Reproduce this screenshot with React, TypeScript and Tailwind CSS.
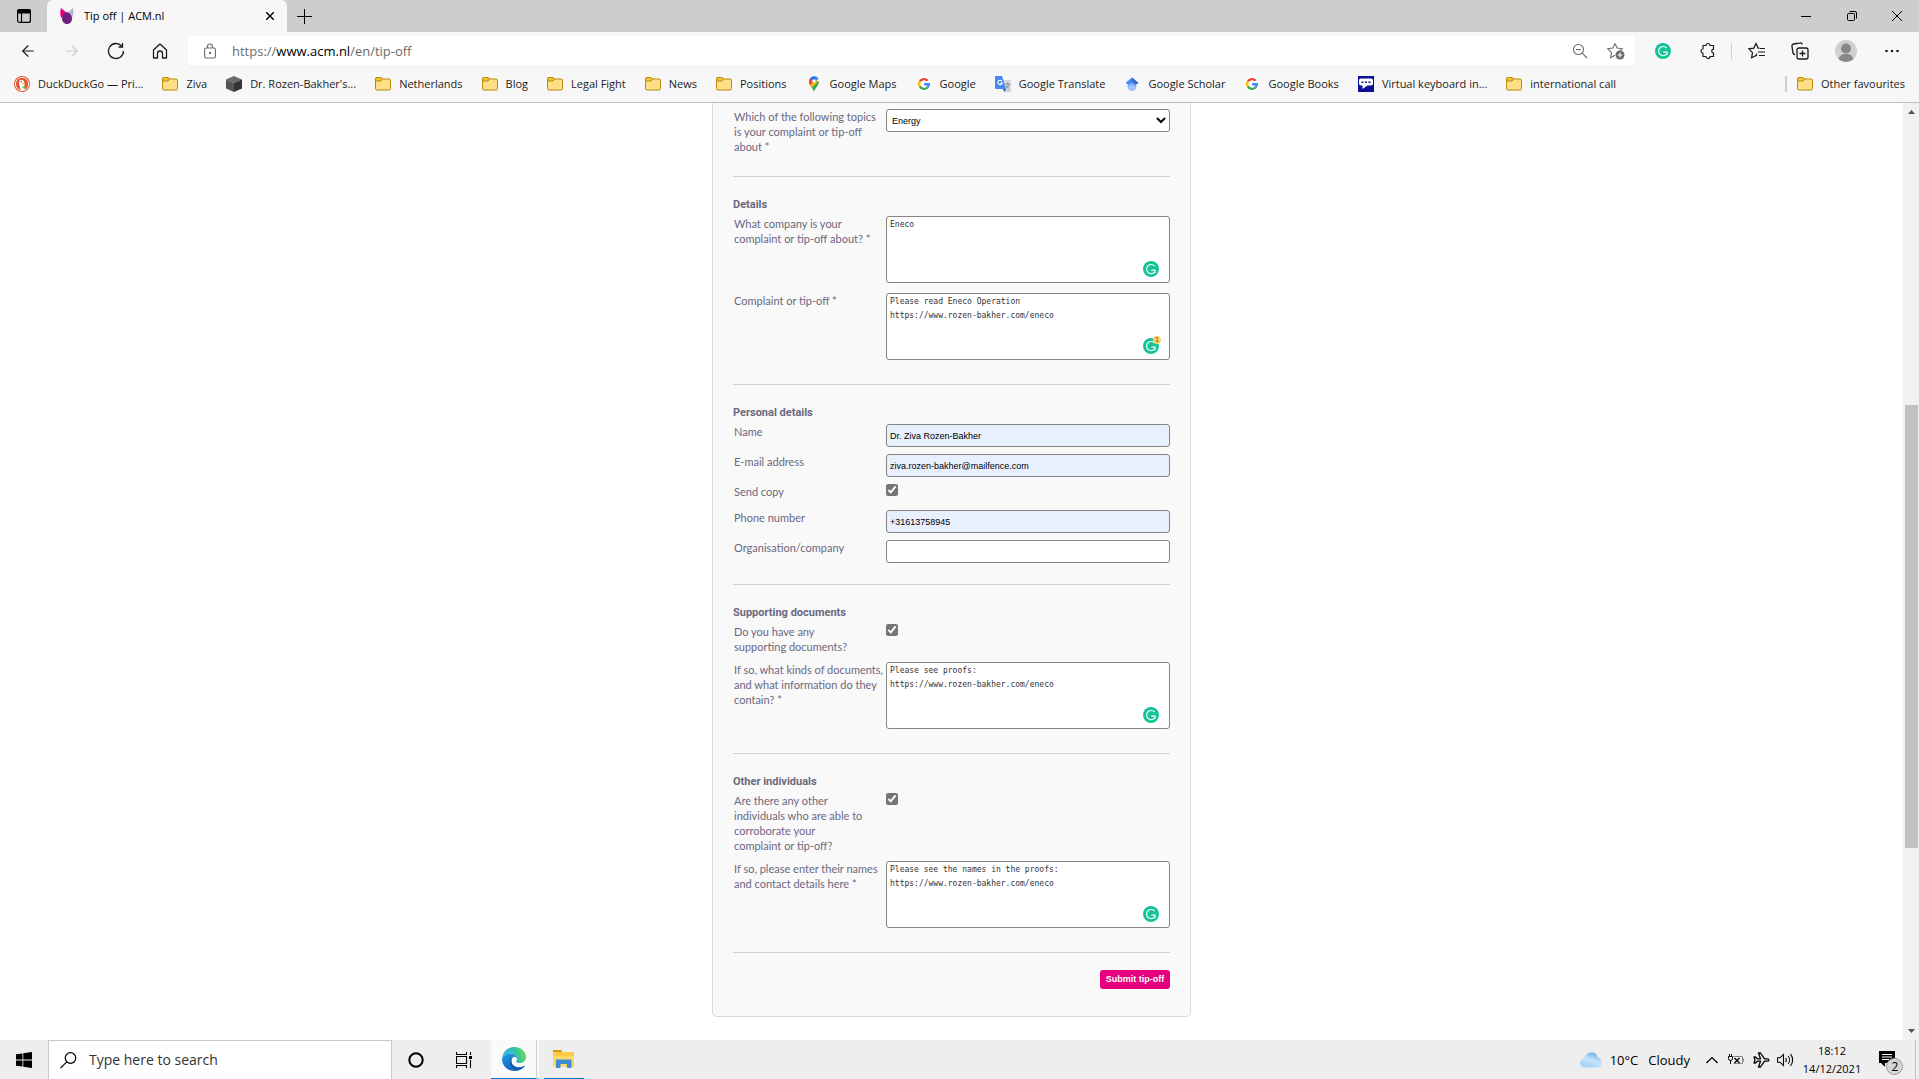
import React, { useState } from 'react';
import type { ReactNode } from 'react';
import { ArrowLeft, ArrowRight } from 'lucide-react';

/* ---------- icons ---------- */

const FolderIcon = () => (
  <svg width="16" height="16" viewBox="0 0 16 16" className="shrink-0">
    <path d="M.5 3a1.500 1.500 0 0 1 1.500-1.500h4L7.500 3H14A1.500 1.500 0 0 1 15.500 4.500v8A1.500 1.500 0 0 1 14 14H2A1.500 1.500 0 0 1 .5 12.500z" fill="#ffdf85" stroke="#b98a10" />
    <path d="M.5 5V3a1.500 1.500 0 0 1 1.500-1.500h4L7.500 3 6 5z" fill="#f3c332" stroke="#b98a10" />
  </svg>
);

const DuckIcon = () => (
  <svg width="16" height="16" viewBox="0 0 16 16" className="shrink-0">
    <circle cx="8" cy="8" r="8" fill="#de5833" />
    <circle cx="8" cy="8" r="6.600" fill="none" stroke="#fff" strokeWidth="0.900" />
    <path d="M5.500 4.500C7 2.800 10 3.800 10.300 6.200c.3 2.500.2 5 .5 7.400-1.500.7-3 .7-4.200.2C6 11 4.500 6.500 5.500 4.500z" fill="#fff" />
    <path d="M8 7.200c1.500-.5 3-.4 3.500.2-.7.700-2 .9-3.500.8z" fill="#fdc12e" />
    <path d="M7.500 11l3.500-.8v2.600z" fill="#65bc46" />
    <circle cx="7.300" cy="5.800" r="0.700" fill="#2d4f8e" />
  </svg>
);

const CubeIcon = () => (
  <svg width="16" height="16" viewBox="0 0 16 16" className="shrink-0">
    <path d="M8 0l8 3.500L8 7 0 3.500z" fill="#6a6a6a" />
    <path d="M0 3.500L8 7v9l-8-3.500z" fill="#555" />
    <path d="M16 3.500L8 7v9l8-3.500z" fill="#333" />
  </svg>
);

const MapsIcon = () => (
  <svg width="16" height="16" viewBox="0 0 16 16" className="shrink-0">
    <path d="M8 16C7.400 12.500 3 9.500 3 5.200L8 5l5 .2C13 9.500 8.600 12.500 8 16z" fill="#34a853" />
    <path d="M3 5.200A5 5 0 0 1 4.200 1.900L8 5.200 4.200 9.300C3.500 8 3 6.700 3 5.200z" fill="#ea4335" />
    <path d="M4.200 9.300L10 3l1.500 3-5.700 5.800z" fill="#fbbc04" />
    <path d="M4.200 1.900A5 5 0 0 1 12.300 2.600L8.500 6.500z" fill="#1a73e8" />
    <path d="M9 0.200A5 5 0 0 1 12.300 2.600L9 6z" fill="#4285f4" />
    <circle cx="8" cy="5" r="1.800" fill="#fff" />
  </svg>
);

const GoogleIcon = () => (
  <svg width="16" height="16" viewBox="0 0 16 16" className="shrink-0">
    <circle cx="8" cy="8" r="8" fill="#fff" />
    <g fill="none" strokeWidth="2.400">
      <path d="M4 5.200A4.900 4.900 0 0 1 11.600 4.700" stroke="#ea4335" />
      <path d="M4 10.800A4.900 4.900 0 0 1 4 5.200" stroke="#fbbc05" />
      <path d="M11.400 11.500A4.900 4.900 0 0 1 4 10.800" stroke="#34a853" />
      <path d="M8 8.200h4.900a4.900 4.900 0 0 1-1.500 3.300" stroke="#4285f4" />
    </g>
  </svg>
);

const TranslateIcon = () => (
  <svg width="16" height="16" viewBox="0 0 16 16" className="shrink-0">
    <path d="M6 4h9a1 1 0 0 1 1 1v10a1 1 0 0 1-1 1H9.500z" fill="#d5d5d5" />
    <path d="M1 0h6l4 13H1a1 1 0 0 1-1-1V1a1 1 0 0 1 1-1z" fill="#4688f1" />
    <path d="M8 13h3l-1.500 3z" fill="#3352c5" />
    <path d="M7 5.200A2.200 2.200 0 1 0 7.300 7H5.200" fill="none" stroke="#fff" strokeWidth="1.100" />
    <path d="M10.500 8h4M12.500 7v1M14 8c-.4 2-1.800 3.300-3 4M11.200 9.500c.6 1.200 1.600 2 2.600 2.600" fill="none" stroke="#607988" strokeWidth="0.800" />
  </svg>
);

const ScholarIcon = () => (
  <svg width="16" height="16" viewBox="0 0 16 16" className="shrink-0">
    <circle cx="8" cy="10.500" r="4.500" fill="#a0c3ff" />
    <path d="M3.500 9a5 5 0 0 1 9 0l-1 2a4 4 0 0 0-7 0z" fill="#76a7fa" />
    <path d="M8 1.500L1.500 7l3 1.500a4 4 0 0 1 7 0l3-1.500z" fill="#4285f4" />
    <path d="M8 1.500L14.500 7l-3 1.500L8 6z" fill="#356ac3" />
  </svg>
);

const KeyboardSiteIcon = () => (
  <svg width="16" height="16" viewBox="0 0 16 16" className="shrink-0">
    <path d="M0 0h16v16H0z" fill="#0a0f9c" />
    <path d="M3 2.500h10a2 2 0 0 1 2 2v3a2 2 0 0 1-2 2H9.500L4.500 13V9.500H3a2 2 0 0 1-2-2v-3a2 2 0 0 1 2-2z" fill="#fff" />
    <path d="M3.500 5.500h2v1.500h-2zM7 5.500h2v1.500H7zM10.500 5.500h2v1.500h-2z" fill="#0a0f9c" />
  </svg>
);

const GrammarlyIcon = () => (
  <svg width="16" height="16" viewBox="0 0 16 16" className="block">
    <circle cx="8" cy="8" r="8" fill="#15c39a" />
    <path d="M11.600 5A4.600 4.600 0 1 0 11.600 11.200M8.300 9.200h3.700v2.800" fill="none" stroke="#fff" strokeWidth="1.200" />
  </svg>
);

const AcmIcon = () => (
  <svg width="14" height="16" viewBox="0 0 14 16" className="shrink-0">
    <path d="M1 0l6 5-6 5C0 6 0 3 1 0z" fill="#e6007e" />
    <path d="M13 0L7 5l5 5c1.500-3 1.800-6 1-10z" fill="#b9b4d0" />
    <path d="M7 4c3 1.500 5 3.500 5 6.500S10 16 7 16s-5-2.500-5-5.500S4 5.500 7 4z" fill="#6a1f7d" />
  </svg>
);

const StarIcon = ({ children }: { children?: ReactNode }) => (
  <svg width="18" height="18" viewBox="0 0 18 18" fill="none" stroke="currentColor" strokeWidth="1.100">
    {children}
  </svg>
);

const EdgeIcon = () => (
  <svg width="24" height="24" viewBox="0 0 24 24">
    <defs>
      <linearGradient id="edgeTop" x1="0" y1="0.500" x2="1" y2="0.300">
        <stop offset="0" stopColor="#2fb3e8" />
        <stop offset="0.600" stopColor="#35c1a5" />
        <stop offset="1" stopColor="#6be34a" />
      </linearGradient>
      <linearGradient id="edgeBody" x1="0" y1="0" x2="0.600" y2="1">
        <stop offset="0" stopColor="#1b9de2" />
        <stop offset="1" stopColor="#0f5fb5" />
      </linearGradient>
    </defs>
    <path d="M.2 11C1 4.500 6 0 12.200 0 19 0 24 4.800 24 10c0 4-3 6-6.300 6-2.500 0-3.700-1-3.700-1.800 0-.7 1-1 1-3C15 8.500 11.500 6.500 8 6.500S1.500 8 .2 11z" fill="url(#edgeTop)" />
    <path d="M.2 11C1.500 8 5 6.500 8 6.500c3.500 0 7 2 7 4.700 0 0-1.500-2-3.500-1.200C8.500 11.500 8 18 14 20c3.500 1.200 6.500 0 8.300-1.200.4-.2.7.1.5.5C20.500 22.500 16.500 24 12.500 24 5 24-.7 18 .2 11z" fill="url(#edgeBody)" />
    <path d="M8.200 13c-.8 4.500 2.600 9 7.800 8.600 3-.2 5-1.500 6.300-2.800C20.500 20 17.500 21.200 14 20c-4.500-1.500-5.300-5.500-4.300-8z" fill="#134f9b" />
  </svg>
);

const ExplorerIcon = () => (
  <svg width="22" height="20" viewBox="0 0 22 20">
    <path d="M0 1h8l1.500 2H0z" fill="#d99a12" />
    <path d="M0 3h21v15H0z" fill="#ffd766" />
    <path d="M0 3h21v4H0z" fill="#ffcb47" />
    <path d="M3 10.500h15.500V19H14v-4H7.500v4H3z" fill="#3c8fd0" />
  </svg>
);

const CloudIcon = () => (
  <svg width="22" height="16" viewBox="0 0 22 16">
    <defs>
      <linearGradient id="cloud" x1="0.800" y1="0" x2="0.300" y2="1">
        <stop offset="0" stopColor="#5ba6e6" />
        <stop offset="0.500" stopColor="#c5e4fb" />
        <stop offset="1" stopColor="#a5d2f5" />
      </linearGradient>
    </defs>
    <path d="M5 15.500a4.500 4.500 0 0 1-.8-9C5 2.500 8 .5 11.500.5c4 0 6 2.500 6.500 5.500 2.500.5 3.700 2.400 3.700 4.700 0 3-2 4.800-4.700 4.800z" fill="url(#cloud)" />
  </svg>
);

/* ---------- browser chrome ---------- */

const TabStrip = () => (
  <div className="flex h-8 shrink-0 items-center bg-[#cdcdcd] text-black">
    <button aria-label="Tab actions" className="flex h-8 w-[47px] items-center justify-center">
      <svg width="14" height="14" viewBox="0 0 14 14" fill="none" stroke="currentColor" strokeWidth="1.200">
        <rect x="0.600" y="0.600" width="12.800" height="12.800" rx="2" />
        <path d="M1 1h12v3H1z" fill="currentColor" />
        <path d="M4.500 4v9.500" />
      </svg>
    </button>
    <div className="flex h-8 w-60 items-center rounded-t-md bg-[#f7f7f7] pl-[13px] pr-3 text-[11px] leading-4">
      <AcmIcon />
      <span className="ml-[10px] flex-1">Tip off | ACM.nl</span>
      <button aria-label="Close tab" className="p-px">
        <svg width="8" height="8" viewBox="0 0 8 8" stroke="currentColor" strokeWidth="1.400">
          <path d="M0 0l8 8M8 0L0 8" />
        </svg>
      </button>
    </div>
    <button aria-label="New tab" className="flex h-8 w-[34px] items-center justify-center">
      <svg width="15" height="15" viewBox="0 0 15 15" stroke="currentColor">
        <path d="M7.500 0v15M0 7.500h15" />
      </svg>
    </button>
    <div className="ml-auto flex">
      <button aria-label="Minimise" className="flex h-8 w-[46px] items-center justify-center">
        <svg width="10" height="10" viewBox="0 0 10 10" stroke="currentColor">
          <path d="M0 5.500h10" />
        </svg>
      </button>
      <button aria-label="Restore" className="flex h-8 w-[46px] items-center justify-center">
        <svg width="10" height="10" viewBox="0 0 10 10" fill="none" stroke="currentColor">
          <rect x="0.500" y="2.500" width="7" height="7" rx="1" />
          <path d="M2.500.5H8A1.500 1.500 0 0 1 9.500 2v5.500" />
        </svg>
      </button>
      <button aria-label="Close" className="flex h-8 w-11 items-center justify-center">
        <svg width="10" height="10" viewBox="0 0 10 10" stroke="currentColor">
          <path d="M0 0l10 10M10 0L0 10" />
        </svg>
      </button>
    </div>
  </div>
);

const Toolbar = () => {
  const [url, setUrl] = useState('');

  return (
    <div className="flex h-[38px] shrink-0 items-center pr-[5px] text-[#1b1b1b]">
      <div className="flex w-[188px] items-center gap-[26px] pl-[19px]">
        <button aria-label="Back">
          <ArrowLeft size={18} strokeWidth={1.5} />
        </button>
        <button aria-label="Forward" className="text-[#c9c9c9]">
          <ArrowRight size={18} strokeWidth={1.5} />
        </button>
        <button aria-label="Refresh">
          <svg width="18" height="18" viewBox="0 0 18 18" fill="none" stroke="currentColor" strokeWidth="1.300">
            <path d="M16.500 9A7.500 7.500 0 1 1 14.600 4M15.500 1v4h-4" />
          </svg>
        </button>
        <button aria-label="Home">
          <svg width="18" height="18" viewBox="0 0 18 18" fill="none" stroke="currentColor" strokeWidth="1.300">
            <path d="M2.500 8L9 2l6.500 6v8h-4v-4.500a2.500 2.500 0 0 0-5 0V16h-4z" strokeLinejoin="round" />
          </svg>
        </button>
      </div>

      <div className="flex h-[30px] flex-1 items-center rounded bg-white pl-4 pr-[10px] text-[#6b6b6b] shadow-xs">
        <svg width="12" height="16" viewBox="0 0 12 16" fill="none" stroke="currentColor" strokeWidth="1.100">
          <rect x="0.600" y="5" width="10.800" height="10" rx="1.500" />
          <path d="M3.500 5V3.500a2.500 2.500 0 0 1 5 0V5" />
          <circle cx="6" cy="10" r="0.600" fill="currentColor" />
        </svg>
        <div className="relative ml-4 flex-1 text-[13px] leading-5">
          <label className="block">
            <span className="pointer-events-none">
              {url === '' && (
                <>
                  https://<span className="text-black">www.acm.nl</span>/en/tip-off
                </>
              )}
            </span>
            <input
              aria-label="Address bar"
              className="absolute inset-0 w-full bg-transparent text-black outline-none"
              value={url}
              onChange={(e) => setUrl(e.target.value)}
            />
          </label>
        </div>
        <button aria-label="Zoom out" className="mr-[19px]">
          <svg width="16" height="16" viewBox="0 0 16 16" fill="none" stroke="currentColor" strokeWidth="1.100">
            <circle cx="6.500" cy="6.500" r="5" />
            <path d="M10.200 10.200L15 15M4 6.500h5" />
          </svg>
        </button>
        <button aria-label="Add to favourites">
          <StarIcon>
            <path d="M8 1.500l2.200 4.600 5 .7-3.200 3M8 13.300L3.600 15.700l.9-5L.9 6.800l5-.7L8 1.500" />
            <circle cx="13" cy="13" r="4.500" fill="currentColor" stroke="none" />
            <path d="M13 10.500v5M10.500 13h5" stroke="#fff" />
          </StarIcon>
        </button>
      </div>

      <div className="flex w-[279px] items-center pl-5">
        <button aria-label="Grammarly">
          <GrammarlyIcon />
        </button>
        <button aria-label="Extensions" className="ml-7">
          <svg width="18" height="18" viewBox="0 0 18 18" fill="none" stroke="currentColor" strokeWidth="1.200">
            <path d="M4 3.500h3a2 2 0 0 1 4 0h3.500v3.800a1.800 1.800 0 1 0 0 3.600v3.600H11a2 2 0 0 1-4 0H4v-3.500a2 2 0 0 1 0-4z" strokeLinejoin="round" />
          </svg>
        </button>
        <span className="ml-[14px] h-4 w-px bg-[#cfcfcf]" />
        <button aria-label="Favourites" className="ml-4">
          <StarIcon>
            <path d="M8.500 11.500v1.800L3.600 15.700l.9-5L.9 6.800l5-.7L8 1.500l2.200 4.600h1" strokeWidth="1.200" />
            <path d="M11.500 6.500H17M10 10h7M11 13.500h6" strokeWidth="1.200" />
          </StarIcon>
        </button>
        <button aria-label="Collections" className="ml-[25px]">
          <svg width="18" height="18" viewBox="0 0 18 18" fill="none" stroke="currentColor" strokeWidth="1.300">
            <path d="M4 12.500A2 2 0 0 1 2 11L1 4.500A2 2 0 0 1 2.500 2L9 1a2 2 0 0 1 2.300 1.500" />
            <rect x="6" y="6" width="11" height="11" rx="2" />
            <path d="M11.500 8.500v6M8.500 11.500h6" />
          </svg>
        </button>
        <button aria-label="Profile" className="ml-[26px]">
          <svg width="22" height="22" viewBox="0 0 22 22">
            <circle cx="11" cy="11" r="11" fill="#d2d0ce" />
            <circle cx="11" cy="8.500" r="5" fill="#8a8886" />
            <path d="M3.500 19a8 8 0 0 1 15 0A11 11 0 0 1 3.500 19z" fill="#8a8886" />
          </svg>
        </button>
        <button aria-label="Settings and more" className="ml-7">
          <svg width="14" height="4" viewBox="0 0 14 4" fill="currentColor">
            <circle cx="1.500" cy="2" r="1.300" />
            <circle cx="7" cy="2" r="1.300" />
            <circle cx="12.500" cy="2" r="1.300" />
          </svg>
        </button>
      </div>
    </div>
  );
};

const bookmarks = [
  { label: 'DuckDuckGo — Pri...', Icon: DuckIcon },
  { label: 'Ziva', Icon: FolderIcon },
  { label: "Dr. Rozen-Bakher's...", Icon: CubeIcon },
  { label: 'Netherlands', Icon: FolderIcon },
  { label: 'Blog', Icon: FolderIcon },
  { label: 'Legal Fight', Icon: FolderIcon },
  { label: 'News', Icon: FolderIcon },
  { label: 'Positions', Icon: FolderIcon },
  { label: 'Google Maps', Icon: MapsIcon },
  { label: 'Google', Icon: GoogleIcon },
  { label: 'Google Translate', Icon: TranslateIcon },
  { label: 'Google Scholar', Icon: ScholarIcon },
  { label: 'Google Books', Icon: GoogleIcon },
  { label: 'Virtual keyboard in...', Icon: KeyboardSiteIcon },
  { label: 'international call', Icon: FolderIcon },
];

const BookmarksBar = () => (
  <nav className="flex h-[33px] shrink-0 items-start border-b border-[#bdbdbd] pl-[14px] pr-[14px] pt-[6px] text-[11px] leading-4 text-[#1b1b1b]">
    <div className="flex gap-[19px]">
      {bookmarks.map(({ label, Icon }) => (
        <a key={label} href="#" className="flex gap-2 whitespace-nowrap">
          <Icon />
          {label}
        </a>
      ))}
    </div>
    <a href="#" className="ml-auto flex gap-2 border-l-2 border-[#cfcfcf] pl-[10px] whitespace-nowrap">
      <FolderIcon />
      Other favourites
    </a>
  </nav>
);

/* ---------- tip-off form ---------- */

const Section = ({ title, children }: { title: string; children: ReactNode }) => (
  <section className="border-t border-[#cfd0d6] pb-[14px]">
    <h2 className="pt-5 pb-1 font-['Roboto',sans-serif] text-[11px] leading-[15px] font-bold">{title}</h2>
    {children}
  </section>
);

type RowProps = { id: string; label: string; className: string; children: ReactNode };

// Labels may carry \n where a line has to end early
const Row = ({ id, label, className, children }: RowProps) => (
  <div className={`flex items-start ${className}`}>
    <label htmlFor={id} className="w-[153px] shrink-0 pl-px leading-[15px] whitespace-pre-line">
      {label}
    </label>
    {children}
  </div>
);

const TextRow = ({ id, label, value = '', type = 'text' }: { id: string; label: string; value?: string; type?: string }) => (
  <Row id={id} label={label} className="pb-[7px]">
    <input
      id={id}
      type={type}
      defaultValue={value}
      className={`h-[23px] min-w-0 flex-1 rounded-[3px] border border-[#858585] px-[3px] font-['Liberation_Sans',sans-serif] text-[9px] text-black ${
        value ? 'bg-[#e8f0fe]' : 'bg-white'
      }`}
    />
  </Row>
);

const CheckRow = ({ id, label }: { id: string; label: string }) => (
  <Row id={id} label={label} className="min-h-[26px] pb-2">
    <input id={id} type="checkbox" defaultChecked className="size-3 accent-[#757575]" />
  </Row>
);

const AreaRow = ({ id, label, value, alerts }: { id: string; label: string; value: string; alerts?: number }) => (
  <Row id={id} label={label} className="pb-[10px]">
    <div className="relative min-w-0 flex-1">
      <textarea
        id={id}
        defaultValue={value}
        className="block h-[67px] w-full resize-none rounded-[3px] border border-[#858585] bg-white px-[3px] pt-px font-['DejaVu_Sans_Mono',monospace] text-[8px] leading-[14px] text-[#333]"
      />
      <span className="absolute right-[11px] bottom-[6px]">
        <GrammarlyIcon />
        {alerts && (
          <span className="absolute -top-[2px] -right-[2px] size-2 rounded-full bg-[#ffd166] text-center font-['Liberation_Sans',sans-serif] text-[7px] leading-2 text-[#5b4a1a]">
            {alerts}
          </span>
        )}
      </span>
    </div>
  </Row>
);

const TipOffForm = () => (
  <form
    className="mx-auto w-[479px] rounded-b-[5px] border border-t-0 border-[#d9d9dc] bg-[#f9f9f9] px-5 pt-[6px] pb-[27px] font-['Lato',sans-serif] text-[11px] text-[#6b6880]"
    onSubmit={(e) => e.preventDefault()}
  >
    <div className="pb-[14px]">
      <Row id="topic" label={'Which of the following topics\nis your complaint or tip-off\nabout *'} className="pb-2">
        <select
          id="topic"
          defaultValue="Energy"
          className="h-[23px] min-w-0 flex-1 rounded-[3px] border border-[#858585] bg-white px-[1px] font-['Liberation_Sans',sans-serif] text-[9px] text-black"
        >
          <option>Energy</option>
        </select>
      </Row>
    </div>

    <Section title="Details">
      <AreaRow id="company" label={'What company is your\ncomplaint or tip-off about? *'} value="Eneco" />
      <AreaRow
        id="complaint"
        label="Complaint or tip-off *"
        value={'Please read Eneco Operation\nhttps://www.rozen-bakher.com/eneco'}
        alerts={1}
      />
    </Section>

    <Section title="Personal details">
      <TextRow id="name" label="Name" value="Dr. Ziva Rozen-Bakher" />
      <TextRow id="email" label="E-mail address" type="email" value="ziva.rozen-bakher@mailfence.com" />
      <CheckRow id="copy" label="Send copy" />
      <TextRow id="phone" label="Phone number" type="tel" value="+31613758945" />
      <TextRow id="organisation" label="Organisation/company" />
    </Section>

    <Section title="Supporting documents">
      <CheckRow id="documents" label={'Do you have any\nsupporting documents?'} />
      <AreaRow
        id="document-kinds"
        label={'If so, what kinds of documents,\nand what information do they\ncontain? *'}
        value={'Please see proofs:\nhttps://www.rozen-bakher.com/eneco'}
      />
    </Section>

    <Section title="Other individuals">
      <CheckRow
        id="individuals"
        label={'Are there any other\nindividuals who are able to\ncorroborate your\ncomplaint or tip-off?'}
      />
      <AreaRow
        id="individual-names"
        label={'If so, please enter their names\nand contact details here *'}
        value={'Please see the names in the proofs:\nhttps://www.rozen-bakher.com/eneco'}
      />
    </Section>

    <div className="flex justify-end border-t border-[#cfd0d6] pt-[17px]">
      <button
        type="submit"
        className="h-[19px] w-[70px] rounded-[3px] bg-[#e6007e] font-['Liberation_Sans',sans-serif] text-[9px] leading-[17px] font-bold whitespace-nowrap text-white"
      >
        Submit tip-off
      </button>
    </div>
  </form>
);

const Scrollbar = () => (
  <div className="flex w-4 shrink-0 flex-col bg-[#f1f1f1]">
    <svg width="16" height="17" viewBox="0 0 16 17" fill="#505050">
      <path d="M5 11h7L8.500 7z" />
    </svg>
    <div className="grow-285" />
    <div className="mr-px ml-[2px] grow-443 bg-[#c1c1c1]" />
    <div className="grow-175" />
    <svg width="16" height="17" viewBox="0 0 16 17" fill="#505050">
      <path d="M5 6h7l-3.500 4z" />
    </svg>
  </div>
);

/* ---------- taskbar ---------- */

const Taskbar = () => (
  <footer className="flex h-[39px] shrink-0 items-stretch bg-[#eeeeee] text-black">
    <button aria-label="Start" className="flex w-12 items-center justify-center">
      <svg width="16" height="16" viewBox="0 0 16 16">
        <path d="M0 2.300L6.500 1.400v6.200H0zM7.300 1.300L16 0v7.600H7.300zM0 8.400h6.500v6.200L0 13.700zM7.300 8.400H16V16l-8.700-1.300z" />
      </svg>
    </button>
    <label className="flex w-[344px] items-center gap-3 border border-b-0 border-[#c8c8c8] bg-white pl-[11px]">
      <svg width="17" height="17" viewBox="0 0 17 17" fill="none" stroke="currentColor" strokeWidth="1.200">
        <circle cx="10.500" cy="6" r="5.300" />
        <path d="M6.800 9.800L.5 16.200" />
      </svg>
      <input
        aria-label="Type here to search"
        placeholder="Type here to search"
        className="min-w-0 flex-1 text-[14px] leading-5 outline-none placeholder:text-[#333]"
      />
    </label>
    <button aria-label="Cortana" className="flex w-12 items-center justify-center">
      <svg width="16" height="16" viewBox="0 0 16 16" fill="none" stroke="currentColor" strokeWidth="2">
        <circle cx="8" cy="8" r="6.700" />
      </svg>
    </button>
    <button aria-label="Task view" className="flex w-12 items-center justify-center">
      <svg width="16" height="16" viewBox="0 0 16 16" fill="none" stroke="currentColor" strokeWidth="1.100">
        <path d="M.5 0v2.500h10V0M.5 16v-2.500h10V16M.5 4.500h10v7H.5zM14.500 0v3M14.500 8v8" />
        <path d="M13 4h3v3h-3z" fill="currentColor" stroke="none" />
      </svg>
    </button>
    <button aria-label="Microsoft Edge" className="ml-[3px] flex w-[45px] items-center justify-center border-b border-[#0078d7] bg-[#fafafa]">
      <EdgeIcon />
    </button>
    <span className="w-[3px] border-b border-l border-b-[#76b9ed] border-l-[#cfcfcf] bg-[#f7f7f7]" />
    <button aria-label="File Explorer" className="ml-[5px] flex w-10 items-center justify-center border-b border-[#0078d7]">
      <ExplorerIcon />
    </button>

    <div className="ml-auto flex items-center">
      <CloudIcon />
      <span className="ml-2 text-[13px] leading-5">10°C</span>
      <span className="ml-[10px] text-[13px] leading-5">Cloudy</span>
      <svg width="12" height="8" viewBox="0 0 12 8" className="ml-4" fill="none" stroke="currentColor" strokeWidth="1.200">
        <path d="M.5 7L6 1.500 11.500 7" />
      </svg>
      <svg width="17" height="14" viewBox="0 0 17 14" className="ml-[10px]" fill="none" stroke="currentColor">
        <path d="M5.500 3.500H14.500v7H5.500M15.500 5.500v3" stroke="#8a8a8a" />
        <path d="M6.500 5l5 5M11.500 5l-5 5" strokeWidth="1.300" />
        <path d="M.5 3.500h4v2a2 2 0 0 1-4 0zM1.500 3.500V1M3.500 3.500V1M2.500 7.500V11" />
      </svg>
      <svg width="17" height="16" viewBox="0 0 17 16" className="ml-2" fill="none" stroke="currentColor" strokeWidth="1.300">
        <path d="M1 5h1.500l2 1.800h3L5.500 1h2l4 5.800H14c2.500 0 2.500 2.400 0 2.400h-2.500l-4 5.800h-2l2-5.800h-3l-2 1.800H1l1-3z" strokeLinejoin="round" />
      </svg>
      <svg width="17" height="14" viewBox="0 0 17 14" className="ml-[7px]" fill="none" stroke="currentColor" strokeWidth="1.100">
        <path d="M.5 4.800h2.500L6.500 1.500v11L3 9.200H.5zM8.500 5a3 3 0 0 1 0 4M11 3a6 6 0 0 1 0 8M13.500 1.200a9 9 0 0 1 0 11.600" />
      </svg>
      <div className="ml-[6px] flex w-16 flex-col items-center text-[11px] leading-[18px] whitespace-nowrap">
        <span>18:12</span>
        <span>14/12/2021</span>
      </div>
      <button aria-label="Notifications" className="relative ml-[15px] h-[39px] w-[37px] border-r border-[#c0c0c0]">
        <svg width="25" height="26" viewBox="0 0 25 26" className="mt-2">
          <path d="M0 0h16v12H6v4l-4-4H0z" />
          <path d="M3 3.500h10M3 6h10M3 8.500h7" stroke="#fff" />
          <circle cx="15.500" cy="15.500" r="8" fill="#d5d5d5" stroke="#9a9a9a" />
        </svg>
        <span className="absolute top-[19px] left-2 w-4 text-center text-[12px] leading-4">2</span>
      </button>
      <span className="w-[3px]" />
    </div>
  </footer>
);

const App = () => (
  <div className="flex h-screen flex-col overflow-hidden bg-[#f7f7f7] font-['Open_Sans','Noto_Sans',sans-serif]">
    <TabStrip />
    <Toolbar />
    <BookmarksBar />
    <div className="flex min-h-0 flex-1 bg-white">
      <main className="flex-1 overflow-hidden">
        <TipOffForm />
      </main>
      <Scrollbar />
    </div>
    <Taskbar />
  </div>
);

export default App;
